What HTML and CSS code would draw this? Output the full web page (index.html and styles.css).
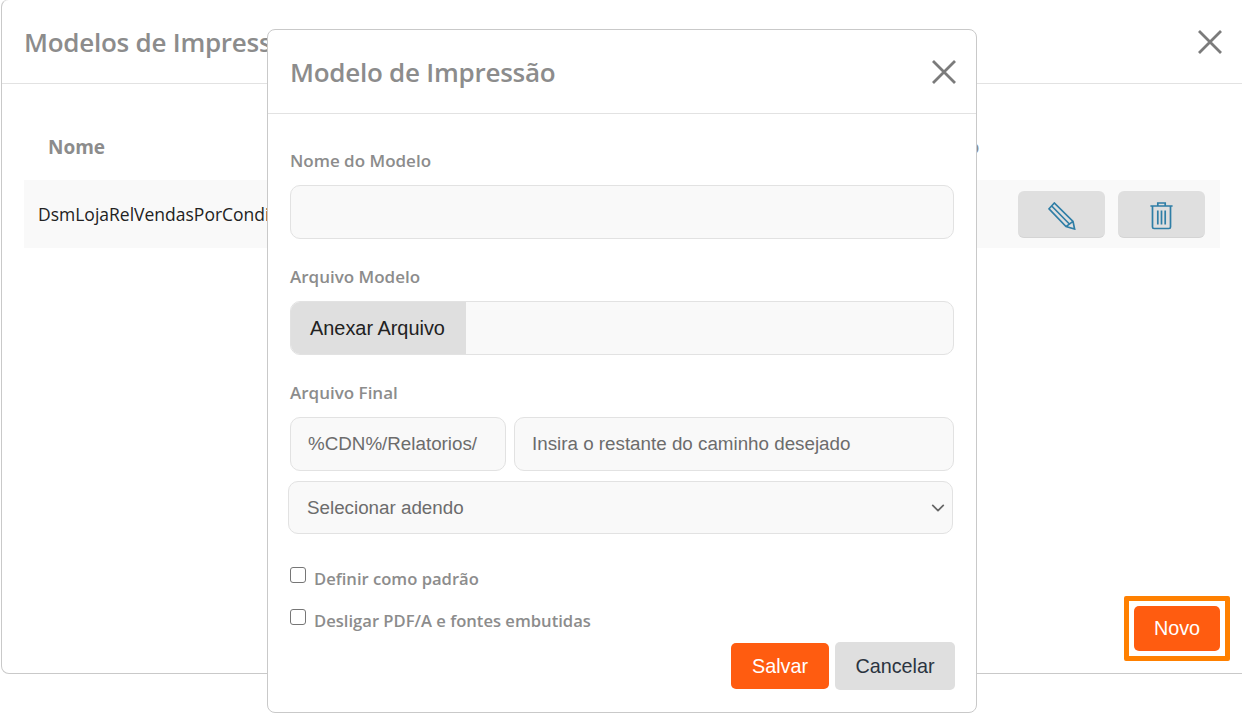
FILE: index.html
```html
<!DOCTYPE html>
<html lang="pt-BR">
<head>
  <meta charset="UTF-8">
  <title>Modelos de Impressão</title>
  <link rel="stylesheet" href="styles.css">
</head>
<body>
  <!-- janela de fundo -->
  <div class="modal modal-list">
    <div class="modal-header header-list">
      <h2 class="modal-title">Modelos de Impressão</h2>
      <svg class="close-icon" viewBox="0 0 24 24"><path d="M1 1 L23 23 M23 1 L1 23"/></svg>
    </div>
    <div class="list-body">
      <div class="table-head">
        <span class="col-name">Nome</span>
        <span class="col-default">Padrão</span>
      </div>
      <div class="table-row">
        <span class="col-name">DsmLojaRelVendasPorCondicao</span>
        <div class="row-actions">
          <button class="icon-button">
            <svg class="pencil-icon" viewBox="0 0 28 28"><path d="M6.3 1 L1 6.8 L18 24.6 L26.6 27 L25 19.4 Z M3.7 4 L21.4 22 M18 24.6 L25 19.4"/></svg>
          </button>
          <button class="icon-button">
            <svg class="trash-icon" viewBox="0 0 23 28"><path d="M0.4 4 H22.6 M7.8 4 V1 H15.2 V4 M2.5 4 V25 Q2.5 26.5 4 26.5 H19 Q20.5 26.5 20.5 25 V4 M7.8 8.5 V22.5 M11.5 8.5 V22.5 M15.2 8.5 V22.5"/></svg>
          </button>
        </div>
      </div>
    </div>
    <div class="list-footer">
      <div class="highlight">
        <button class="btn btn-primary btn-new">Novo</button>
      </div>
    </div>
  </div>

  <!-- modal de cima -->
  <div class="modal modal-form">
    <div class="modal-header header-form">
      <h2 class="modal-title">Modelo de Impressão</h2>
      <svg class="close-icon" viewBox="0 0 24 24"><path d="M1 1 L23 23 M23 1 L1 23"/></svg>
    </div>
    <form class="form-body">
      <div class="field">
        <label class="field-label" for="nome">Nome do Modelo</label>
        <input class="form-control" type="text" id="nome">
      </div>
      <div class="field">
        <label class="field-label">Arquivo Modelo</label>
        <div class="file-group">
          <span class="file-button">Anexar Arquivo</span>
          <span class="file-name"></span>
        </div>
      </div>
      <div class="field">
        <label class="field-label" for="caminho">Arquivo Final</label>
        <div class="path-group">
          <span class="form-control path-prefix">%CDN%/Relatorios/</span>
          <input class="form-control path-input" type="text" id="caminho" placeholder="Insira o restante do caminho desejado">
        </div>
        <select class="form-select">
          <option>Selecionar adendo</option>
        </select>
      </div>
      <div class="checks">
        <label class="check"><input type="checkbox"><span>Definir como padrão</span></label>
        <label class="check"><input type="checkbox"><span>Desligar PDF/A e fontes embutidas</span></label>
      </div>
      <div class="form-actions">
        <button type="button" class="btn btn-primary btn-save">Salvar</button>
        <button type="button" class="btn btn-cancel">Cancelar</button>
      </div>
    </form>
  </div>
</body>
</html>
```

FILE: styles.css
```css
:root{
  --border-color:#c9c9c9;
  --line-color:#e2e2e2;
  --title-color:#8c8c8c;
  --field-bg:#f9f9f9;
  --grey-button:#dfdfdf;
  --orange:#ff5c10;
  --icon-blue:#2f7ea6;
}
*{
  box-sizing: border-box;
  margin: 0;
  padding: 0;
}
body{
  background: #fff;
  width: 1242px;
  height: 714px;
  overflow: hidden;
  position: relative;
  font-family: "Open Sans", sans-serif;
}
.modal{
  background: #fff;
  border: 1px solid var(--border-color);
  border-radius: 8px;
  display: flex;
  flex-direction: column;
}
.modal-list{
  width: 1248px;
  height: 675px;
  margin: -1px 0 0 1px;
  border-top-color: var(--line-color);
}
.modal-form{
  position: absolute;
  left: 267px;
  top: 29px;
  width: 710px;
  height: 684px;
}
.modal-header{
  display: flex;
  align-items: center;
  justify-content: space-between;
  border-bottom: 1px solid var(--line-color);
}
.header-list{
  height: 84px;
  padding: 0 26px 0 22px;
}
.header-form{
  height: 84px;
  padding: 0 20px 0 22px;
}
.modal-title{
  font-size: 26px;
  font-weight: 600;
  color: var(--title-color);
  letter-spacing: -0.25px;
}
.close-icon{
  width: 24px;
  height: 24px;
  fill: none;
  stroke: #7b7b7b;
  stroke-width: 2.8;
}
.list-body{
  flex: 1;
  padding: 50px 0 0 22px;
  width: 1218px;
}
.table-head{
  display: flex;
  height: 46px;
  padding-left: 24px;
  font-size: 19px;
  font-weight: 700;
  color: var(--title-color);
}
.table-head .col-name{
  width: 864px;
}
.table-row{
  display: flex;
  align-items: center;
  justify-content: space-between;
  height: 68px;
  background: var(--field-bg);
  padding: 0 15px 0 14px;
  font-size: 17.5px;
  color: #222;
}
.row-actions{
  display: flex;
  gap: 13px;
  margin-top: 1px;
}
.icon-button{
  width: 87px;
  height: 47px;
  padding-top: 3px;
  background: var(--grey-button);
  border: 0;
  border-bottom: 1px solid #d4d4d4;
  border-radius: 6px;
  display: flex;
  align-items: center;
  justify-content: center;
}
.pencil-icon,
.trash-icon{
  fill: none;
  stroke: var(--icon-blue);
  stroke-width: 1.7;
}
.pencil-icon{
  width: 28px;
  height: 28px;
}
.trash-icon{
  width: 23px;
  height: 28px;
}
.list-footer{
  display: flex;
  justify-content: flex-end;
  padding: 0 12px 12px 0;
  width: 1240px;
}
.highlight{
  border: 5px solid #ff8000;
  border-radius: 2px;
  padding: 5px;
  background: #fff;
  height: 65px;
}
.btn{
  border: 0;
  border-radius: 5px;
  font-family: "Liberation Sans", sans-serif;
  font-size: 19.8px;
  cursor: pointer;
}
.btn-primary{
  background: var(--orange);
  color: #fff;
}
.btn-new{
  width: 86px;
  height: 45px;
}
.form-body{
  padding: 36px 22px 0;
  display: flex;
  flex-direction: column;
  flex: 1;
}
.field{
  margin-bottom: 27px;
}
.field-label{
  display: block;
  height: 24px;
  margin-bottom: 11px;
  font-size: 17px;
  font-weight: 600;
  line-height: 22px;
  color: var(--title-color);
}
.form-control{
  display: block;
  width: 100%;
  height: 54px;
  background: var(--field-bg);
  border: 1px solid var(--line-color);
  border-radius: 10px;
  padding: 0 17px;
  font-family: "Liberation Sans", sans-serif;
  font-size: 18.8px;
  color: #6c6c6c;
  outline: none;
}
.form-control::placeholder{
  color: #6c6c6c;
  opacity: 1;
}
.file-group{
  display: flex;
  height: 54px;
  background: var(--field-bg);
  border: 1px solid var(--line-color);
  border-radius: 10px;
  overflow: hidden;
}
.file-button{
  display: flex;
  align-items: center;
  width: 176px;
  margin: -1px 0 -1px -1px;
  padding-left: 20px;
  background: var(--grey-button);
  font-family: "Liberation Sans", sans-serif;
  font-size: 19.9px;
  color: #222;
}
.path-group{
  display: flex;
  gap: 8px;
  margin-bottom: 10px;
}
.path-prefix{
  display: flex;
  align-items: center;
  width: 216px;
  flex: none;
}
.path-input{
  flex: 1;
  width: auto;
}
.form-select{
  display: block;
  appearance: none;
  width: 665px;
  height: 53px;
  margin-left: -2px;
  padding: 0 16px 0 18px;
  background: var(--field-bg) url("data:image/svg+xml,%3Csvg xmlns='http://www.w3.org/2000/svg' viewBox='0 0 16 16'%3E%3Cpath fill='none' stroke='%23666' stroke-width='2' stroke-linecap='round' stroke-linejoin='round' d='M2 5l6 6 6-6'/%3E%3C/svg%3E") no-repeat right 7px center / 14px 14px;
  border: 1px solid var(--line-color);
  border-radius: 10px;
  font-family: "Liberation Sans", sans-serif;
  font-size: 18.8px;
  color: #6c6c6c;
}
.checks{
  display: flex;
  flex-direction: column;
  gap: 20px;
  margin-top: 6px;
}
.check{
  display: flex;
  align-items: center;
  gap: 8px;
  height: 22px;
  font-size: 16.6px;
  font-weight: 600;
  color: var(--title-color);
}
.check input{
  appearance: none;
  width: 16px;
  height: 16px;
  margin-top: -6px;
  background: #fff;
  border: 1.5px solid #767676;
  border-radius: 3px;
}
.form-actions{
  display: flex;
  justify-content: flex-end;
  align-items: center;
  gap: 6px;
  margin: 11px -1px 0 0;
}
.btn-save{
  width: 98px;
  height: 46px;
}
.btn-cancel{
  width: 120px;
  height: 48px;
  background: var(--grey-button);
  color: #2b3440;
}
```
